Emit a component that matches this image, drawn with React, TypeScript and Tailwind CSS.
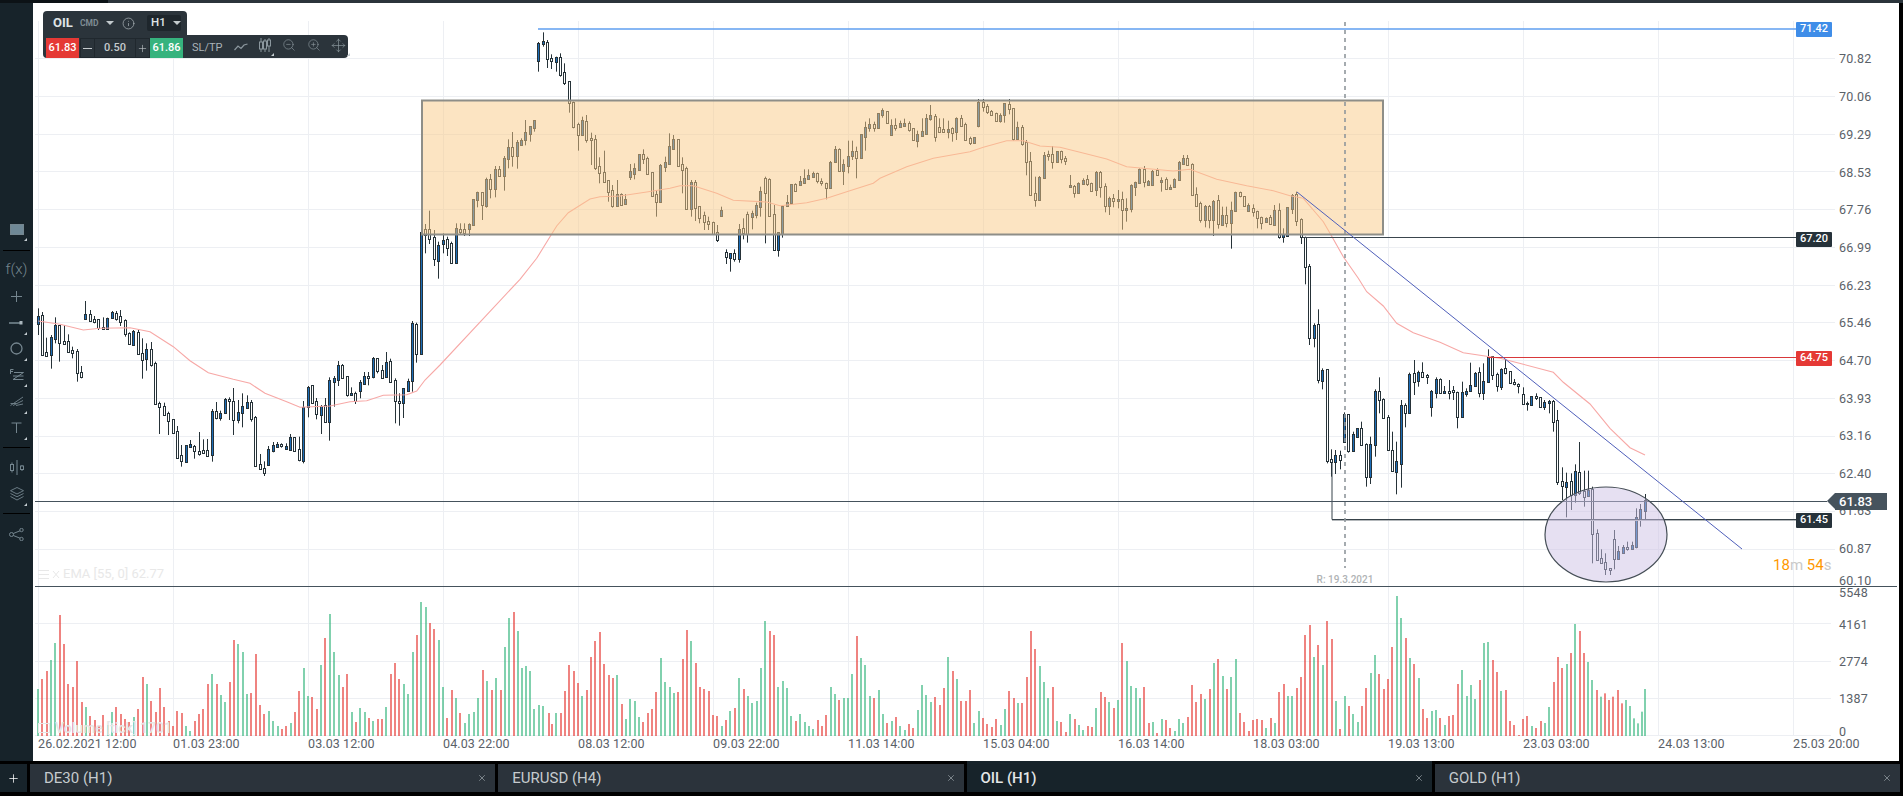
import { Move, Plus, ZoomIn, ZoomOut, X, Info } from "lucide-react";

// candle data read off the chart: x, fill, body top, body bottom, wick top, wick bottom
const candleSegments = [
    {
        ox: 20,
        oy: 290,
        data: "55 b 78 103 55 135,67 w 75 195 66 198,79 w 187 198 143 200,94 b 142 196 135 236,106 b 105 146 82 160,118 w 105 160 105 215,133 w 154 161 105 165,145 w 154 185 133 188,157 w 181 190 170 205,172 w 184 250 177 275,184 w 247 262 228 265,196 b 72 86 33 86,211 w 73 92 60 95,223 w 88 95 78 100,235 w 88 113 88 120,250 w 110 117 82 120,262 b 83 117 83 120,277 b 67 85 63 87,289 w 70 86 63 92,301 w 79 95 60 108,316 w 90 133 88 140,328 w 130 161 127 164,340 b 124 164 120 164,355 w 127 193 120 195,367 w 190 209 145 266,379 b 178 208 160 242,394 w 178 224 156 230,406 w 220 343 215 345,418 w 340 352 335 432,433 w 349 376 338 378,445 w 370 394 365 435,460 w 388 430 388 432,472 w 424 505 408 507,484 w 496 514 465 530,499 b 466 517 466 517,511 b 463 470 450 473,523 w 467 484 465 506,538 w 484 491 426 497,550 w 481 488 448 491,562 w 481 499 447 500,577 b 364 496 357 515,589 w 364 385 336 388,601 b 370 383 362 392,616 b 327 370 324 372,628 w 328 334 322 390,640 w 332 391 294 435,655 b 367 391 330 400,667 b 349 370 310 412,682 b 337 353 316 356,694 w 337 386 330 395,706 w 382 529 378 530,721 w 523 538 492 540,733 w 535 548 514 558,745 b 478 524 468 527,760 b 466 484 456 487,772 b 463 470 456 473,784 w 463 469 460 473,799 b 469 478 460 480,811 b 441 479 432 481,823 w 442 482 442 485,838 w 478 511 440 514,850 b 350 513 333 520,865 b 290 351 288 382,877 w 286 339 286 340,889 w 334 373 324 388,904 b 348 375 345 432,916 w 346 397 324 398,928 b 271 397 262 452,943 b 265 275 258 350,955 b 226 270 213 288,967 w 226 263 222 266,982 w 259 315 259 320,994 b 310 316 292 318,1006 w 310 332 305 342,1021 b 277 302 270 325,1033 b 259 281 246 285,1045 w 259 265 246 286,1060 b 204 262 201 265,1072 w 205 242 205 250,1087 w 241 263 225 266,1099 b 217 262 186 264,1111 w 214 275 206 276,1126 w 271 334 265 400,1138 w 334 340 310 407,1150 b 295 340 295 384,1165 b 273 302 266 305,1177 b 100 274 93 305,1189 w 103 193 98 218",
    },
    {
        ox: 400,
        oy: 20,
        data: "64 b 636 1002 636 1002,76 w 628 645 612 700,88 w 628 658 572 672,103 w 652 718 630 738,115 b 674 722 665 776,130 b 660 673 640 700,142 w 658 685 650 708,154 w 670 730 665 730,169 b 625 730 610 730,181 w 626 635 610 645,193 w 628 638 610 648,208 b 613 628 610 648,220 b 538 616 538 616,232 b 515 541 515 562,247 w 517 556 517 600,259 b 477 557 473 563,271 w 476 508 462 535,286 b 448 508 438 532,298 w 448 467 438 468,313 b 414 467 408 512,325 b 382 418 358 445,337 w 380 408 336 440,352 b 367 409 360 446,364 b 361 375 355 378,376 b 337 361 300 376,391 b 318 341 318 365,403 b 301 323 301 335,416 b 70 124 66 155,430 b 64 71 37 80,442 w 67 118 60 144,454 w 115 124 103 147,469 b 110 127 110 155,481 w 112 164 100 170,493 w 157 188 130 195,508 w 184 250 184 278,520 w 247 320 245 325,535 w 312 344 308 392,547 b 300 344 290 345,559 w 304 359 285 368,574 w 355 361 338 435,586 w 358 443 345 450,598 w 439 458 412 490,613 w 457 485 392 487,625 w 481 517 480 545,637 w 511 557 495 563,652 b 523 559 480 560,664 w 523 555 520 558,676 b 538 552 522 555,691 b 454 470 432 480,703 b 445 461 430 478,718 b 403 449 403 450,730 w 403 418 388 432,742 w 415 461 410 462,757 w 457 527 457 528,769 w 522 545 510 590,781 b 436 545 432 548,796 b 427 440 410 456,808 b 379 431 340 432,820 b 358 386 345 388,835 w 358 437 358 438,847 w 433 449 412 520,859 w 444 568 440 570,874 b 487 566 480 590,886 w 486 563 480 603,898 w 559 594 558 610,913 w 586 606 575 630,925 w 603 611 590 630,940 w 607 642 605 645,952 w 637 660 615 666,964 b 570 588 560 590,979 w 697 710 688 732,991 b 700 713 700 755,1003 w 700 716 688 725,1018 b 628 716 612 728,1030 w 625 640 595 658,1042 w 583 642 575 668,1057 b 580 590 572 628,1069 b 556 584 548 595,1081 b 514 560 500 590,1096 w 475 518 470 670,1108 w 478 587 475 590,1123 w 583 690 555 693,1135 b 637 690 637 710,1147 b 557 641 555 653,1162 b 547 557 525 560,1174 b 493 548 493 550,1186 w 493 512 490 515,1201 b 484 494 468 497,1213 b 475 488 448 490,1225 b 466 476 448 478,1240 b 460 470 455 472,1252 w 460 483 458 490,1264 w 482 490 475 497,1279 w 488 503 488 538,1291 b 425 503 423 505,1306 b 388 425 378 428,1318 w 388 454 385 456,1330 b 432 454 418 495,1345 b 407 437 362 460,1357 b 394 408 362 420,1369 w 394 415 380 475,1384 b 343 415 343 417,1396 b 320 350 305 392,1408 b 313 323 295 335,1423 w 313 323 305 335,1435 b 280 323 280 325",
    },
    {
        ox: 880,
        oy: 90,
        data: "7 b 60 75 55 83,22 w 64 99 64 100,34 b 106 136 88 137,46 w 106 113 85 122,61 b 99 110 92 112,73 b 99 107 86 108,88 w 100 120 94 125,100 w 115 150 115 151,112 b 133 152 122 172,127 b 124 137 85 138,139 b 85 131 72 133,151 b 76 87 45 92,166 w 78 140 72 155,178 w 112 125 85 126,190 w 118 125 85 126,205 b 118 125 92 145,217 w 115 128 112 155,229 b 85 127 82 150,244 w 85 107 75 110,256 w 103 149 98 152,271 w 143 160 140 165,283 b 142 160 142 161,295 b 36 109 27 112,310 w 36 51 27 65,322 w 49 66 42 72,334 w 62 74 60 76,349 w 70 92 68 95,361 b 76 92 70 98,373 b 40 76 40 98,388 w 43 58 27 73,400 w 54 147 54 152,412 b 112 148 95 150,427 w 112 162 105 167,439 w 155 217 150 256,451 w 214 314 186 318,466 w 310 330 260 350,478 b 262 331 258 332,493 b 196 265 186 265,505 w 193 199 182 212,517 w 193 217 168 236,532 b 184 217 183 218,544 w 184 206 182 220,556 w 203 212 198 225,571 b 286 292 255 293,583 w 287 308 285 323,595 b 280 310 277 311,610 b 271 283 265 285,622 w 268 282 255 288,634 w 278 304 278 305,649 b 246 301 243 318,661 w 246 292 243 323,676 w 289 347 280 367,688 b 324 349 320 375,700 w 325 334 312 352,715 b 328 334 300 355,727 w 328 361 305 419,739 b 355 361 325 395,754 b 286 358 283 367,766 b 277 290 275 318,778 b 238 280 235 282,793 w 238 277 228 292,805 b 274 286 270 288,817 b 244 286 240 288,832 w 241 256 235 258,844 b 271 277 262 305,859 w 268 296 262 300,871 b 290 296 284 298,883 b 268 292 265 292,898 b 217 271 213 272,910 b 205 222 195 225,922 w 205 226 195 228,937 w 222 316 220 318,949 w 313 347 292 350,961 w 340 391 335 398,976 b 349 391 345 412,988 w 349 391 345 415,1000 b 334 391 330 438,1015 w 331 403 315 416,1027 b 376 404 350 406,1039 w 376 400 350 412,1054 b 361 400 335 476,1066 b 307 364 305 365,1081 w 307 319 305 322,1093 w 319 347 318 350,1105 b 346 364 340 366,1120 w 355 367 343 380,1132 w 364 385 362 415,1144 w 382 400 380 418,1159 b 385 397 382 399,1171 w 382 403 375 405,1183 b 361 406 345 408,1198 w 361 440 340 446,1210 b 433 440 415 458,1222 b 352 437 352 440,1237 b 316 356 312 372,1249 w 312 393 305 408,1264 w 387 442 385 462",
    },
    {
        ox: 1280,
        oy: 180,
        data: "76 w 170 262 170 313,88 w 258 475 252 495,103 b 436 475 430 502,115 w 433 601 388 610,127 b 571 604 565 628,142 w 568 842 568 850,154 w 838 845 808 890,166 b 824 845 810 882,181 w 826 841 812 868,193 b 703 785 697 787,205 w 703 812 703 818,220 b 763 813 755 815,232 b 745 770 745 770,244 w 745 796 725 798,259 w 793 892 790 920,271 b 793 892 770 912,286 b 632 796 628 830,298 w 632 661 592 700,310 w 658 715 655 717,325 w 712 811 705 812,337 w 811 874 755 876,349 b 844 877 785 943,364 b 676 853 660 923,376 w 676 700 670 742,388 b 583 700 578 702,403 w 580 607 540 645,415 b 577 604 572 620,427 w 577 590 547 592,442 w 586 591 582 612,454 b 634 680 630 710,469 b 598 638 592 655,481 w 598 640 595 642,493 b 632 640 618 642,508 w 634 640 600 658,520 w 631 637 618 660,532 w 637 710 635 745,547 b 637 710 605 712,559 b 632 643 625 650,571 b 616 634 548 636,586 b 578 619 576 620,598 w 577 640 562 652,610 b 604 640 550 660,625 b 532 607 508 608,637 w 529 586 528 600,652 w 583 619 578 635,664 b 566 622 565 630,676 w 565 580 540 583,691 w 574 610 574 612,703 w 607 613 597 616,715 w 613 619 610 640,730 w 643 673 622 675,742 w 668 673 665 692,754 b 649 676 649 677,769 w 649 655 640 660,781 w 652 682 651 684,793 b 667 682 660 690,808 b 664 670 660 700,820 w 664 727 660 755,832 w 721 907 690 915,847 w 904 919 862 960,859 b 907 922 878 1012,874 w 904 945 880 990,886 b 874 945 853 968,898 w 877 940 786 945,913 w 932 952 872 980,925 b 930 949 872 950,937 w 928 1063 920 1150,952 w 1060 1141 1048 1143,964 w 1135 1150 1108 1152,976 w 1147 1168 1120 1185,991 w 1165 1171 1165 1185,1003 w 1076 1138 1050 1168,1015 b 1114 1138 1098 1140,1030 b 1100 1120 1095 1122,1042 w 1102 1108 1085 1112,1057 b 1096 1108 1085 1110,1069 b 1012 1102 985 1105,1081 b 988 1018 972 1040,1096 b 960 992 942 1022",
    },
];

// x, colour, top of the bar, in zoomed units
const volumeSegments = [
    {
        ox: 30,
        data: "25 g 297,37 r 267,52 r 243,64 g 210,76 g 159,91 r 75,103 r 162,115 r 282,130 r 291,142 r 213,157 r 336,169 g 351,181 r 378,196 r 390,208 r 405,220 r 375,235 g 405,247 g 366,259 r 351,274 r 372,286 r 387,298 r 396,313 g 381,325 r 357,340 r 261,352 g 282,364 r 333,379 r 366,391 r 294,403 r 351,418 r 393,430 r 408,442 r 363,457 r 369,469 g 408,481 g 423,496 r 393,508 r 372,520 r 357,535 r 282,547 g 252,562 r 282,574 g 315,586 g 336,601 r 276,613 r 150,625 g 162,640 g 186,652 g 312,664 r 309,679 r 192,691 r 345,703 r 372,718 g 363,730 g 393,745 g 408,757 r 417,769 r 408,784 g 399,796 r 366,808 r 303,823 g 234,835 g 318,847 r 321,862 r 357,874 g 225,886 r 144,901 g 72,913 g 186,928 g 255,940 r 291,952 r 252,967 g 366,979 r 396,991 g 354,1006 g 366,1018 r 384,1030 g 393,1045 r 387,1057 r 387,1069 g 351,1084 r 252,1096 r 219,1108 r 267,1123 g 282,1135 g 312,1150 g 186,1162 r 135,1174 g 36,1189 g 51,1201 r 99,1213 r 117,1228 g 150,1240 g 291,1252 r 384,1267 r 300,1279 g 324,1291 r 369,1306 g 399,1318 g 372,1333 g 366,1345 g 324,1358 r 240,1372 g 273,1385 r 300,1397 g 264,1412 r 300,1424 g 171,1436 g 84,1451 r 66,1463 g 123,1475 g 234,1489 g 228,1501 g 243,1513 g 357,1528 g 345,1540 g 348,1556 r 369",
    },
    {
        ox: 550,
        data: "7 r 402,19 g 369,34 r 369,46 r 303,58 r 225,73 r 243,85 r 279,97 g 318,112 r 300,124 r 201,136 r 153,151 r 126,163 r 222,178 r 255,190 r 264,202 g 255,217 r 342,229 g 387,241 g 327,256 g 333,268 g 381,280 r 396,295 r 369,307 r 357,319 r 306,334 g 204,346 g 276,361 g 291,373 g 309,385 r 306,400 r 207,412 r 120,424 g 153,439 r 219,451 r 291,463 r 297,478 r 303,490 r 375,502 r 378,517 g 408,529 r 390,541 g 363,556 r 354,568 g 264,583 r 297,595 g 318,607 g 339,622 g 333,634 g 234,646 g 93,661 r 123,673 r 135,685 g 291,700 g 273,712 g 294,724 g 378,739 r 393,751 g 372,766 g 396,778 g 408,790 g 417,805 r 390,817 r 408,829 r 375,844 g 291,856 g 312,868 r 330,883 g 324,895 g 324,907 g 252,922 r 138,934 g 204,946 g 225,961 g 318,973 r 324,988 g 300,1000 g 372,1012 r 399,1027 g 393,1039 r 381,1051 g 408,1066 g 420,1078 r 402,1090 r 414,1105 g 360,1117 g 285,1129 g 315,1144 g 336,1156 r 321,1171 r 345,1183 r 294,1195 g 201,1210 r 243,1222 g 267,1234 r 333,1249 r 333,1261 r 300,1273 g 399,1288 g 363,1300 r 384,1312 r 402,1327 r 411,1339 r 387,1354 g 405,1366 g 357,1378 r 303,1393 r 324,1405 g 339,1417 r 339,1432 r 261,1444 r 123,1456 r 177,1471 g 228,1483 g 276,1495 g 324,1510 r 291,1522 g 393,1534 r 396,1549 r 426",
    },
    {
        ox: 1070,
        data: "1 g 372,16 r 387,28 g 405,40 g 420,55 r 408,67 r 411,79 g 354,94 r 306,106 r 321,118 g 336,133 r 354,145 g 330,157 r 159,172 g 213,184 g 288,199 g 294,211 g 324,223 r 291,238 r 399,250 g 396,262 r 429,277 g 387,289 r 390,301 r 414,316 g 423,328 g 387,340 g 399,355 r 381,367 r 285,379 r 336,394 r 312,406 g 327,421 r 297,433 g 219,445 r 207,460 g 258,472 r 297,484 g 261,499 g 207,511 r 369,523 r 396,538 r 423,550 r 390,562 r 387,577 r 390,589 g 414,604 r 384,616 g 399,628 r 306,643 r 282,655 g 318,667 g 318,682 r 294,694 r 261,706 r 135,721 r 105,733 g 201,745 r 165,760 g 225,772 r 93,787 r 147,799 g 333,811 r 417,826 g 318,838 r 348,850 g 372,865 g 396,877 r 348,889 r 294,904 g 249,916 g 195,928 r 252,943 r 297,955 r 267,967 r 171,982 g 18,994 g 84,1009 r 144,1021 g 204,1033 r 222,1048 g 264,1060 r 357,1072 r 384,1087 g 363,1099 g 360,1111 r 384,1126 g 405,1138 r 378,1150 r 375,1165 r 282,1177 g 240,1192 g 318,1204 g 285,1216 g 327,1231 r 270,1243 g 159,1255 g 156,1270 r 210,1282 r 246,1294 g 303,1309 r 300,1321 r 393,1333 r 405,1348 r 435,1360 r 387,1372 r 378,1387 g 408,1399 r 414,1414 r 393,1426 g 399,1438 g 351,1453 r 276,1465 r 201,1477 r 234,1492 g 222,1504 r 189,1516 g 102,1531 r 123,1543 r 189,1555 g 216,1567 g 270,1580 r 300,1592 g 320,1604 r 310,1618 r 330,1630 r 320,1643 r 300,1655 r 340,1669 g 330,1681 g 348,1693 g 385,1705 g 400,1717 g 365,1726 g 297",
    },
];

const emaSegments = [
    { ox: 20, oy: 290, pts: [55, 93, 120, 103, 190, 120, 240, 115, 330, 113, 390, 125, 460, 170, 510, 212, 565, 248, 640, 268, 690, 280, 735, 310, 800, 335, 840, 352, 930, 348, 990, 335, 1040, 332, 1090, 316, 1160, 314, 1190, 303, 1215, 270, 1260, 225] },
    { ox: 400, oy: 20, pts: [360, 778, 410, 715, 450, 650, 470, 618, 505, 578, 570, 537, 600, 530, 660, 528, 740, 516, 810, 505, 840, 497, 880, 497, 950, 520, 1000, 541, 1100, 546, 1140, 557, 1220, 548, 1280, 535, 1340, 515, 1420, 490] },
    { ox: 880, oy: 90, pts: [0, 265, 80, 230, 160, 205, 270, 185, 310, 172, 380, 152, 430, 152, 480, 168, 540, 172, 600, 187, 680, 207, 740, 230, 880, 243, 930, 238, 1010, 268, 1100, 287, 1180, 302, 1230, 317, 1270, 325, 1300, 360, 1330, 395] },
    { ox: 1280, oy: 180, pts: [150, 160, 190, 230, 235, 295, 260, 335, 310, 378, 350, 430, 400, 458, 480, 487, 550, 518, 660, 535, 730, 553, 820, 577, 850, 607, 930, 672, 990, 745, 1050, 803, 1095, 825] },
];

const candles = candleSegments.flatMap((seg) =>
    seg.data.split(",").map((row) => {
        const [x, fill, top, bottom, wickTop, wickBottom] = row.split(" ");
        const toY = (v: string) => seg.oy + Number(v) / 3;
        return {
            x: Math.floor(seg.ox + Number(x) / 3),
            blue: fill === "b",
            top: Math.round(toY(top)) + 0.5,
            bottom: Math.round(toY(bottom)) + 0.5,
            wickTop: toY(wickTop),
            wickBottom: toY(wickBottom),
        };
    })
);

const volumes = volumeSegments.flatMap((seg) =>
    seg.data.split(",").map((row) => {
        const [x, color, top] = row.split(" ");
        return {
            x: seg.ox + Number(x) / 3,
            green: color === "g",
            top: 590 + Number(top) / 3,
        };
    })
);

const emaPoints = emaSegments
    .flatMap((seg) => {
        const out: string[] = [];
        for (let i = 0; i < seg.pts.length; i += 2) {
            out.push(`${(seg.ox + seg.pts[i] / 3).toFixed(1)},${(seg.oy + seg.pts[i + 1] / 3).toFixed(1)}`);
        }
        return out;
    })
    .join(" ");

const priceLabels: [string, number][] = [
    ["70.82", 58], ["70.06", 96], ["69.29", 134], ["68.53", 172], ["67.76", 209],
    ["66.99", 247], ["66.23", 285], ["65.46", 322], ["64.70", 360], ["63.93", 398],
    ["63.16", 435], ["62.40", 473], ["61.63", 510], ["60.87", 548], ["60.10", 580],
    ["5548", 592], ["4161", 624], ["2774", 661], ["1387", 698], ["0", 731],
];

const dateLabels = [
    "26.02.2021 12:00", "01.03 23:00", "03.03 12:00", "04.03 22:00", "08.03 12:00",
    "09.03 22:00", "11.03 14:00", "15.03 04:00", "16.03 14:00", "18.03 03:00",
    "19.03 13:00", "23.03 03:00", "24.03 13:00", "25.03 20:00",
];

const gridX = Array.from({ length: 14 }, (_, i) => 38.5 + 135 * i);
const gridY = Array.from({ length: 14 }, (_, i) => Math.round(58 + 37.75 * i) + 0.5);

function Corner() {
    return (
        <span className="absolute right-[6px] bottom-[1px] w-0 h-0 border-l-[3px] border-l-transparent border-b-[3px] border-b-[#c5cdd1]" />
    );
}

function SideItem({ children, corner }: { children: React.ReactNode; corner?: boolean }) {
    return (
        <div className="relative h-[26.33px] flex items-center justify-center text-[#75868f]">
            {children}
            {corner && <Corner />}
        </div>
    );
}

function Sep() {
    return <div className="mx-[3px] h-px bg-black" />;
}

function Sidebar() {
    return (
        <div className="w-[33px] shrink-0 bg-[#17232a] pt-[213px]">
            <SideItem corner>
                <svg width="14" height="11" viewBox="0 0 14 11">
                    <rect x="0.5" y="0.5" width="13" height="10" fill="#6f8896" stroke="#75868f" />
                </svg>
            </SideItem>
            <div className="pt-[7.5px] pb-[6px]"><Sep /></div>
            <SideItem>
                <span className="text-[15px] leading-none font-light">f(x)</span>
            </SideItem>
            <SideItem>
                <svg width="13" height="13" viewBox="0 0 13 13" stroke="currentColor">
                    <path d="M6.5 1v11M1 6.5h11" />
                </svg>
            </SideItem>
            <SideItem corner>
                <svg width="15" height="6" viewBox="0 0 15 6">
                    <path d="M0 3h12" stroke="currentColor" strokeWidth="1.6" />
                    <rect x="10.5" y="1" width="3" height="3.5" fill="#aab6bc" />
                </svg>
            </SideItem>
            <SideItem corner>
                <svg width="13" height="13" viewBox="0 0 13 13" fill="none" stroke="currentColor" strokeWidth="1.3">
                    <circle cx="6.5" cy="6.5" r="5.5" />
                </svg>
            </SideItem>
            <SideItem corner>
                <svg width="14" height="13" viewBox="0 0 14 13" fill="none" stroke="currentColor">
                    <path d="M0.5 5V0.5H3.5M0.5 2.5H3" />
                    <path d="M4 3.5h9.5L3 10.5h10.5M3 7h10.5" />
                </svg>
            </SideItem>
            <SideItem corner>
                <svg width="14" height="11" viewBox="0 0 14 11" fill="none" stroke="currentColor" strokeWidth="0.9">
                    <path d="M0.5 9.5L13 1M3 9.5L13 4.5M6 9.5L13 8M0.5 7.5h6" />
                </svg>
            </SideItem>
            <SideItem corner>
                <svg width="11" height="11" viewBox="0 0 11 11" stroke="currentColor">
                    <path d="M0.5 1h10M5.5 1v10" />
                </svg>
            </SideItem>
            <div className="pt-[6px] pb-[6px]"><Sep /></div>
            <SideItem>
                <svg width="14" height="15" viewBox="0 0 14 15" fill="none" stroke="currentColor">
                    <path d="M7 0v15M2 2.5v10M12 5v6" />
                    <rect x="0.5" y="4.5" width="3" height="6" fill="#17232a" />
                    <rect x="10.5" y="6" width="3" height="3.5" fill="#17232a" />
                </svg>
            </SideItem>
            <SideItem corner>
                <svg width="14" height="14" viewBox="0 0 14 14" fill="none" stroke="currentColor" strokeWidth="0.9">
                    <path d="M7 0.5l6.5 3.2L7 7 0.5 3.7z" />
                    <path d="M0.5 6.5L7 9.8l6.5-3.3M0.5 9.5L7 13l6.5-3.5" />
                </svg>
            </SideItem>
            <div className="pt-[6px] pb-[8px]"><Sep /></div>
            <SideItem>
                <svg width="15" height="13" viewBox="0 0 15 13" fill="none" stroke="currentColor">
                    <circle cx="2.5" cy="6.5" r="2" />
                    <circle cx="12.5" cy="2" r="1.7" />
                    <circle cx="12.5" cy="11" r="1.7" />
                    <path d="M4.3 5.5L11 2.8M4.3 7.5L11 10.2" />
                </svg>
            </SideItem>
        </div>
    );
}

function Triangle({ className }: { className: string }) {
    return <span className={`w-0 h-0 border-x-[4px] border-x-transparent border-t-[4px] ${className}`} />;
}

function Toolbar() {
    return (
        <div className="absolute left-[10px] top-[8px] flex flex-col items-start">
            <div className="w-[144px] h-[24px] rounded-t-[4px] bg-[#2b343b] flex items-center pl-[10px]">
                <span className="w-[18px] text-[13px] font-bold text-[#dfe3e5]">OIL</span>
                <span className="ml-[9px] w-[19px] text-[8.5px] font-bold text-[#7f8c94]">CMD</span>
                <Triangle className="ml-[7px] border-t-[#c3cacd]" />
                <Info size={13} strokeWidth={1.3} className="ml-[8px] text-[#aeb7bb]" />
                <div className="ml-[12px] w-[34px] h-[16px] rounded-[2px] bg-[#1e262c] flex items-center pl-[4px] gap-[7px]">
                    <span className="text-[11.5px] font-medium text-[#dfe3e5]">H1</span>
                    <Triangle className="border-t-[#c3cacd]" />
                </div>
            </div>
            <div className="w-[305px] h-[23px] rounded-b-[4px] rounded-tr-[4px] bg-[#2b343b] flex items-start pt-[3px] pl-[3px]">
                <div className="w-[33px] h-[20px] bg-[#e53935] text-white text-[11px] font-medium flex items-center justify-center">61.83</div>
                <div className="ml-px w-[15px] h-[20px] border border-[#20282e] text-[#c5cbce] flex items-center justify-center">
                    <span className="w-[9px] h-px bg-[#c5cbce]" />
                </div>
                <div className="w-[40px] h-[20px] border-y border-[#20282e] text-[#c5cbce] text-[11px] font-medium flex items-center justify-center">0.50</div>
                <div className="w-[15px] h-[20px] border border-[#20282e] text-[#c5cbce] flex items-center justify-center">
                    <Plus size={11} strokeWidth={1.3} />
                </div>
                <div className="w-[33px] h-[20px] bg-[#36b37e] text-white text-[11px] font-medium flex items-center justify-center">61.86</div>
                <span className="ml-[9px] w-[28px] h-[20px] leading-[20px] text-[11px] text-[#aab3b8]">SL/TP</span>
                <svg className="ml-[14px] mt-[3px] text-[#8b979e]" width="14" height="12" viewBox="0 0 14 12" fill="none" stroke="currentColor" strokeWidth="1.2">
                    <path d="M0.5 9L4 5l3 2.5L10 4l3.5-1" />
                </svg>
                <div className="relative ml-[11px] w-[14px] h-[18px] text-[#8b979e]">
                    <svg width="12" height="15" viewBox="0 0 12 15" fill="none" stroke="currentColor">
                        <path d="M2 0v14M6 1v13M10 0v14" />
                        <rect x="0.5" y="4" width="3" height="7" fill="#2b343b" />
                        <rect x="4.5" y="3" width="3" height="8" fill="#2b343b" />
                        <rect x="8.5" y="2" width="3" height="6" fill="#2b343b" />
                    </svg>
                    <span className="absolute right-[-1px] bottom-0 w-0 h-0 border-l-[3px] border-l-transparent border-b-[3px] border-b-[#c5cdd1]" />
                </div>
                <ZoomOut size={14} strokeWidth={1.1} className="ml-[9px] text-[#8b979e]" />
                <ZoomIn size={14} strokeWidth={1.1} className="ml-[11px] text-[#8b979e]" />
                <div className="relative ml-[10px] w-[16px] h-[18px] text-[#8b979e]">
                    <Move size={15} strokeWidth={1.1} />
                    <span className="absolute right-[-3px] bottom-0 w-0 h-0 border-l-[3px] border-l-transparent border-b-[3px] border-b-[#c5cdd1]" />
                </div>
            </div>
        </div>
    );
}

function ChartSvg() {
    return (
        <svg
            className="absolute inset-0"
            width="1866"
            height="758"
            viewBox="33 3 1866 758"
            style={{ fontFamily: "Roboto" }}
        >
            {gridX.map((x) => (
                <line key={x} x1={x} x2={x} y1="21" y2="736" stroke="#edeff3" />
            ))}
            {gridY.map((y) => (
                <line key={y} x1="35" x2="1835" y1={y} y2={y} stroke="#edeff3" />
            ))}
            {[623.5, 661.5, 698.5, 735.5].map((y) => (
                <line key={y} x1="35" x2="1831" y1={y} y2={y} stroke="#edeff3" />
            ))}

            {candles.map((c, i) => (
                <g key={i}>
                    <line x1={c.x + 0.5} x2={c.x + 0.5} y1={c.wickTop} y2={c.wickBottom} stroke="#263238" />
                    <rect
                        x={c.x - 0.5}
                        y={c.top}
                        width="2"
                        height={Math.max(c.bottom - c.top, 1)}
                        fill={c.blue ? "#1c6db8" : "#ffffff"}
                        stroke="#263238"
                    />
                </g>
            ))}

            {volumes.map((v, i) => (
                <rect
                    key={i}
                    x={Math.round(v.x) - 0.6}
                    y={v.top}
                    width="1.2"
                    height={736 - v.top}
                    fill={v.green ? "#2fb37a" : "#e5322d"}
                />
            ))}

            <polyline points={emaPoints} fill="none" stroke="#f7a8a6" strokeWidth="1.1" />

            <rect x="422" y="100.5" width="961" height="134" fill="#faca85" fillOpacity="0.5" stroke="#8e8e88" strokeWidth="2" />

            <line x1="538" x2="1796" y1="29" y2="29" stroke="#5f9ff0" strokeWidth="1.5" />
            <line x1="1303" x2="1796" y1="237.5" y2="237.5" stroke="#3a454d" />
            <line x1="1488" x2="1796" y1="357.5" y2="357.5" stroke="#d8383a" />
            <path d="M1332 463V519.5H1796" fill="none" stroke="#37424a" />
            <line x1="1332" x2="1796" y1="520.5" y2="520.5" stroke="#b4b8bb" />
            <line x1="35" x2="1827" y1="501.5" y2="501.5" stroke="#45525c" />
            <line x1="1345" x2="1345" y1="22" y2="568" stroke="#8f979c" strokeDasharray="4 4" strokeWidth="1.6" />
            <line x1="1297" y1="192" x2="1742" y2="549" stroke="#4f5fba" />

            <ellipse cx="1606" cy="534.5" rx="61" ry="47.5" fill="#cdc1e5" fillOpacity="0.5" stroke="#454e56" strokeWidth="1.2" />

            <line x1="35" x2="1897" y1="586.5" y2="586.5" stroke="#45525c" />

            <text x="1345" y="582.5" textAnchor="middle" fontSize="10" fontWeight="500" fill="#b0b3b5">R: 19.3.2021</text>

            {priceLabels.map(([label, y]) => (
                <text key={label} x="1839" y={y + 4.5} fontSize="12.5" letterSpacing="0.2" fill="#5a6168">{label}</text>
            ))}
            {dateLabels.map((label, i) => (
                <text key={label} x={38 + 135 * i} y="748" fontSize="12.5" letterSpacing="0.1" fill="#5a6168">{label}</text>
            ))}

            <g fill="none" stroke="#e8e8e8">
                <path d="M38 570.5h11M38 574.5h11M38 578.5h11" />
                <path d="M53 571l6 7M59 571l-6 7" />
            </g>
            <text x="63" y="578" fontSize="13" fill="#e8e8e8">EMA [55, 0] 62.77</text>
            <rect x="38.5" y="723.5" width="11" height="9" fill="none" stroke="#e6e6e6" />
            <text x="55" y="733" fontSize="14" fontWeight="500" fill="#e6e6e6">Volume [tick] 1701</text>
        </svg>
    );
}

function PriceTag({ text, top, color }: { text: string; top: string; color: string }) {
    return (
        <div className={`absolute left-[1763px] w-[36px] h-[15px] rounded-[1px] text-white text-[11px] font-medium flex items-center justify-center ${top} ${color}`}>
            {text}
        </div>
    );
}

function Tab({ label, active }: { label: string; active?: boolean }) {
    return (
        <div className={`flex-1 flex items-center justify-between pl-[14px] pr-[8px] ${active ? "bg-[#17232a] -mt-[3px] pt-[3px]" : "bg-[#2b333b]"}`}>
            <span className={`text-[15px] ${active ? "font-medium text-[#e4e7e8]" : "text-[#c6cbce]"}`}>{label}</span>
            <X size={10} strokeWidth={1.6} className="text-[#a4adb2]" />
        </div>
    );
}

export default function App() {
    return (
        <div className="w-[1903px] h-[796px] bg-black flex flex-col overflow-hidden" style={{ fontFamily: "Roboto, sans-serif" }}>
            <div className="h-[3px] flex shrink-0">
                <div className="w-[108px] bg-[#0c1216]" />
                <div className="flex-1 bg-[#2b343b]" />
            </div>
            <div className="h-[758px] flex">
                <Sidebar />
                <div className="relative w-[1866px] bg-white overflow-hidden">
                    <ChartSvg />
                    <Toolbar />
                    <PriceTag text="71.42" top="top-[19px]" color="bg-[#3f8de8]" />
                    <PriceTag text="67.20" top="top-[229px]" color="bg-[#26323a]" />
                    <PriceTag text="64.75" top="top-[348px]" color="bg-[#e53935]" />
                    <PriceTag text="61.45" top="top-[510px]" color="bg-[#26323a]" />
                    <div className="absolute left-[1794px] top-[490px] w-[60px] h-[17px] flex">
                        <span className="w-0 h-0 border-y-[8.5px] border-y-transparent border-r-[8px] border-r-[#46535d]" />
                        <span className="flex-1 bg-[#46535d] pl-[4px] text-white text-[13px] font-medium leading-[17px]">61.83</span>
                    </div>
                    <div className="absolute left-[1740px] top-[553px] text-[15px] leading-[18px] text-[#c9c9c9]">
                        <span className="text-[#ff9800]">18</span>m <span className="text-[#ff9800]">54</span>s
                    </div>
                </div>
            </div>
            <div className="h-[28px] mt-[3px] mr-[3px] flex gap-[3px] shrink-0">
                <div className="w-[27px] bg-[#17232a] flex items-center justify-center text-white">
                    <Plus size={13} strokeWidth={1.4} />
                </div>
                <Tab label="DE30 (H1)" />
                <Tab label="EURUSD (H4)" />
                <Tab label="OIL (H1)" active />
                <Tab label="GOLD (H1)" />
            </div>
        </div>
    );
}
